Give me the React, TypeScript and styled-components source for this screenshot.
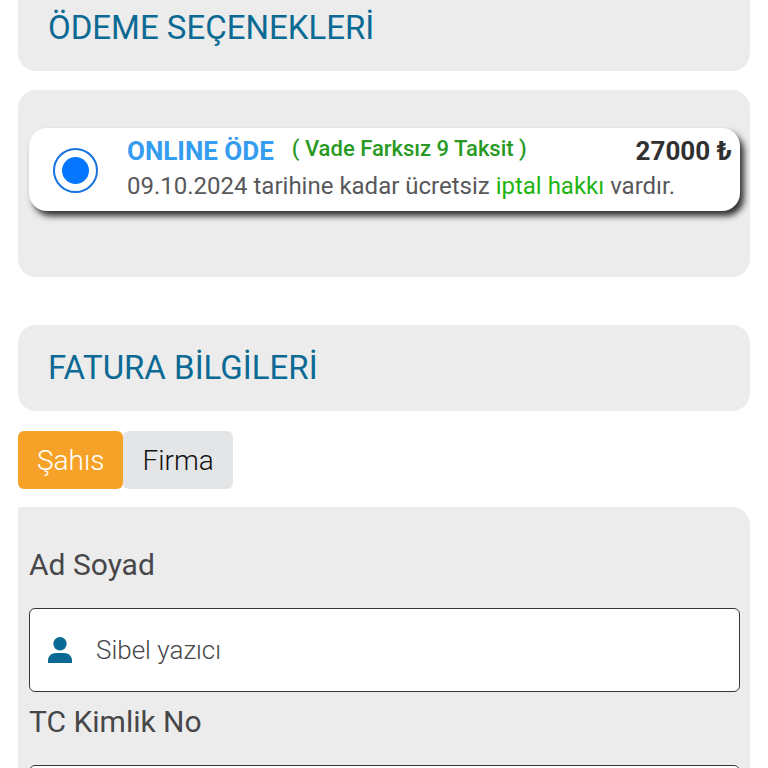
import React, { useState } from "react";
import styled, { createGlobalStyle } from "styled-components";

const GlobalStyle = createGlobalStyle`
  *, *::before, *::after { box-sizing: border-box; }
  body {
    margin: 0;
    background: #fff;
    font-family: Roboto, "Liberation Sans", sans-serif;
    color: #47474a;
  }
  button, input { font-family: inherit; }
`;

const Page = styled.main`
  height: 100vh;
  overflow: hidden;
  padding: 0 18px;
`;

const SectionHeader = styled.header<{ $continued?: boolean }>`
  background: #ececec;
  border-radius: ${(p) => (p.$continued ? "0 0 18px 18px" : "18px")};
  padding: ${(p) => (p.$continued ? "8px 30px 23px" : "23px 30px")};
`;

const SectionTitle = styled.h2`
  margin: 0;
  font-size: 33px;
  line-height: 40px;
  font-weight: 400;
  color: #0b6a94;
`;

const PaymentPanel = styled.section`
  margin: 19px 0 48px;
  padding: 38px 10px 66px 11px;
  background: #ececec;
  border-radius: 18px;
`;

const PaymentOption = styled.label`
  display: flex;
  align-items: center;
  gap: 29px;
  padding: 5px 8px 8px 24px;
  background: #fff;
  border-radius: 18px;
  box-shadow: 4px 5px 6px 0 rgba(0, 0, 0, 0.8);
  cursor: pointer;
`;

const Radio = styled.input`
  appearance: none;
  flex: none;
  display: grid;
  place-items: center;
  width: 45px;
  height: 45px;
  margin: 4px 0 0;
  border: 2px solid #1673e0;
  border-radius: 50%;

  &:checked::before {
    content: "";
    width: 27px;
    height: 27px;
    border-radius: 50%;
    background: #0577ff;
  }
`;

const OptionBody = styled.span`
  flex: 1;
  min-width: 0;
`;

const OptionHeading = styled.span`
  display: flex;
  align-items: flex-start;
  line-height: 36px;
`;

const OptionName = styled.strong`
  font-size: 26px;
  font-weight: 700;
  color: #359cf0;
`;

const Installments = styled.span`
  margin-left: 18px;
  font-size: 22px;
  line-height: 32px;
  font-weight: 500;
  color: #289a23;
`;

const Price = styled.strong`
  margin-left: auto;
  font-size: 26px;
  font-weight: 700;
  color: #303030;
`;

const OptionNote = styled.span`
  display: block;
  font-size: 24px;
  line-height: 34px;
  color: #58585a;
`;

const Highlight = styled.span`
  color: #1fb512;
`;

const Tabs = styled.div`
  display: flex;
  margin: 20px 0 18px;
`;

const Tab = styled.button<{ $active: boolean }>`
  height: 58px;
  padding: 0 19px;
  border: 0;
  border-radius: 6px;
  font-size: 28px;
  font-weight: 300;
  color: ${(p) => (p.$active ? "#fff" : "#111")};
  background: ${(p) => (p.$active ? "#f6a228" : "#e4e5e7")};
  cursor: pointer;
`;

const FormPanel = styled.form`
  padding: 38px 10px 40px 11px;
  background: #ececec;
  border-radius: 0 18px 18px 18px;
`;

const FieldLabel = styled.label<{ $first?: boolean }>`
  display: block;
  padding: ${(p) => (p.$first ? "0 0 23px" : "10px 0 23px")};
  font-size: 30px;
  line-height: 40px;
  color: #47474a;
`;

const Field = styled.div`
  display: flex;
  align-items: center;
  gap: 24px;
  height: 84px;
  padding: 0 18px;
  background: #fff;
  border: 1px solid #38383a;
  border-radius: 6px;
`;

const PersonIcon = styled.svg`
  flex: none;
  width: 24px;
  height: 27px;
  fill: #0b6a94;
`;

const TextInput = styled.input`
  flex: 1;
  min-width: 0;
  height: 100%;
  padding: 0;
  border: 0;
  outline: 0;
  background: transparent;
  font-size: 26px;
  font-weight: 300;
  color: #47474a;
`;

function Person() {
  return (
    <PersonIcon viewBox="0 0 24 27" aria-hidden="true">
      <circle cx="12" cy="6.7" r="6.7" />
      <path d="M0 26v-2.500C0 19 3.500 16 8 16h8c4.500 0 8 3 8 7.500V26z" />
    </PersonIcon>
  );
}

export default function App() {
  const [invoiceType, setInvoiceType] = useState("Şahıs");

  return (
    <>
      <GlobalStyle />
      <Page lang="tr">
        <SectionHeader $continued>
          <SectionTitle>ÖDEME SEÇENEKLERİ</SectionTitle>
        </SectionHeader>

        <PaymentPanel>
          <PaymentOption htmlFor="pay-online">
            <Radio id="pay-online" type="radio" name="payment" defaultChecked />
            <OptionBody>
              <OptionHeading>
                <OptionName>ONLINE ÖDE</OptionName>
                <Installments>( Vade Farksız 9 Taksit )</Installments>
                <Price>27000 ₺</Price>
              </OptionHeading>
              <OptionNote>
                09.10.2024 tarihine kadar ücretsiz <Highlight>iptal hakkı</Highlight> vardır.
              </OptionNote>
            </OptionBody>
          </PaymentOption>
        </PaymentPanel>

        <SectionHeader>
          <SectionTitle>FATURA BİLGİLERİ</SectionTitle>
        </SectionHeader>

        <Tabs role="tablist">
          {["Şahıs", "Firma"].map((name) => (
            <Tab
              key={name}
              type="button"
              role="tab"
              aria-selected={invoiceType === name}
              $active={invoiceType === name}
              onClick={() => setInvoiceType(name)}
            >
              {name}
            </Tab>
          ))}
        </Tabs>

        <FormPanel>
          <FieldLabel htmlFor="full-name" $first>
            Ad Soyad
          </FieldLabel>
          <Field>
            <Person />
            <TextInput id="full-name" type="text" defaultValue="Sibel yazıcı" />
          </Field>
          <FieldLabel htmlFor="identity-no">TC Kimlik No</FieldLabel>
          <Field>
            <Person />
            <TextInput id="identity-no" type="text" />
          </Field>
        </FormPanel>
      </Page>
    </>
  );
}
